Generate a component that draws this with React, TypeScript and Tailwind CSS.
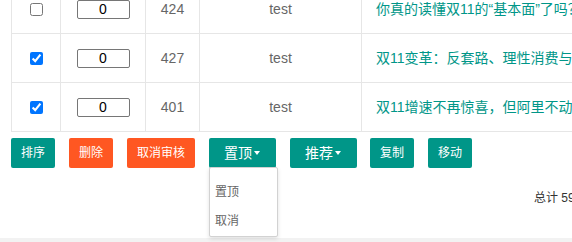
import { useState } from 'react'

const rows = [
  { checked: false, sort: '0', id: 424, author: 'test', title: '你真的读懂双11的“基本面”了吗？从数据看消费趋势' },
  { checked: true, sort: '0', id: 427, author: 'test', title: '双11变革：反套路、理性消费与新零售的未来' },
  { checked: true, sort: '0', id: 401, author: 'test', title: '双11增速不再惊喜，但阿里不动声色地完成了布局' }
]

function Caret() {
  return <span className="ml-[2px] inline-block w-0 h-0 border-l-[3px] border-r-[3px] border-t-[4px] border-l-transparent border-r-transparent border-t-white" />
}

export default function App() {
  const [items, setItems] = useState(rows)

  const toggle = (i: number) =>
    setItems(items.map((r, j) => (j === i ? { ...r, checked: !r.checked } : r)))

  return (
    <div className="w-[572px] h-[242px] overflow-hidden bg-[#f2f2f2] font-['Liberation_Sans','Noto_Sans_CJK_SC',sans-serif]">
      <div className="h-[238px] bg-white flex flex-col items-start">
        {/* Table */}
        <div className="ml-[11px] -mt-[15px] w-[760px] border-l border-[#e6e6e6] text-[14px] text-[#666]">
          {items.map((r, i) => (
            <div key={r.id} className="grid grid-cols-[49px_85px_54px_162px_1fr] h-[49px]">
              <div className="flex items-center justify-center border-r border-b border-[#e6e6e6]">
                <input type="checkbox" checked={r.checked} onChange={() => toggle(i)} className="m-0 w-[13px] h-[13px]" />
              </div>
              <div className="flex items-center justify-center border-r border-b border-[#e6e6e6]">
                <input
                  defaultValue={r.sort}
                  className="w-[53px] h-[19px] border border-[#767676] rounded-[2px] text-center text-[14px] text-black font-['Liberation_Sans',sans-serif]"
                />
              </div>
              <div className="flex items-center justify-center border-r border-b border-[#e6e6e6]">{r.id}</div>
              <div className="flex items-center justify-center border-r border-b border-[#e6e6e6]">{r.author}</div>
              <div className="flex items-center pl-[14px] border-b border-[#e6e6e6] whitespace-nowrap text-[#009688]">{r.title}</div>
            </div>
          ))}
        </div>

        {/* Toolbar */}
        <div className="mt-[6px] pl-[11px] flex items-start gap-[14px] text-white text-[12px]">
          <button className="h-[30px] px-[10px] rounded-[2px] bg-[#009688]">排序</button>
          <button className="h-[30px] px-[10px] rounded-[2px] bg-[#ff5722]">删除</button>
          <button className="h-[30px] px-[10px] rounded-[2px] bg-[#ff5722]">取消审核</button>
          <div className="relative">
            <button className="h-[30px] w-[67px] pl-[15px] flex items-center rounded-[2px] bg-[#009688] text-[14px]">
              置顶<Caret />
            </button>
            <div className="absolute left-0 top-[29px] w-[69px] h-[70px] pt-[10px] bg-white border border-[#d2d2d2] rounded-[2px] shadow-[0_2px_4px_rgba(0,0,0,0.12)] text-[#666] text-[12px]">
              <div className="h-[29px] leading-[29px] pl-[5px]">置顶</div>
              <div className="h-[29px] leading-[29px] pl-[5px]">取消</div>
            </div>
          </div>
          <button className="h-[30px] w-[67px] pl-[15px] flex items-center rounded-[2px] bg-[#009688] text-[14px]">
            推荐<Caret />
          </button>
          <button className="-ml-px h-[30px] px-[10px] rounded-[2px] bg-[#009688]">复制</button>
          <button className="h-[30px] px-[10px] rounded-[2px] bg-[#009688]">移动</button>
        </div>

        {/* Footer */}
        <div className="mt-[20px] pl-[534px] h-[20px] leading-[20px] text-[12px] text-[#333] whitespace-nowrap">总计 59 条记录</div>
      </div>
    </div>
  )
}
